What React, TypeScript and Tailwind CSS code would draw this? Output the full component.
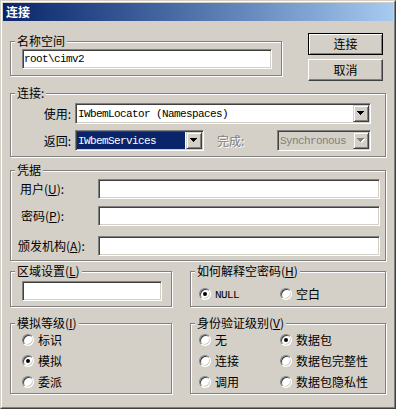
import { ReactNode } from "react";
import clsx from "clsx";

const sunken =
  "border border-t-[#808080] border-l-[#808080] border-r-white border-b-white shadow-[inset_1px_1px_0_#404040,inset_-1px_-1px_0_#d4d0c8]";
const raised =
  "border border-t-[#d4d0c8] border-l-[#d4d0c8] border-r-[#404040] border-b-[#404040] shadow-[inset_1px_1px_0_#fff,inset_-1px_-1px_0_#808080]";
const mono = "font-['Liberation_Mono',monospace] text-[11px] tracking-[-0.6px]";

const Group = ({ label, className, children }: { label: ReactNode; className?: string; children?: ReactNode }) => (
  <div className={clsx("relative shrink-0 border border-[#808080] shadow-[inset_1px_1px_0_#fff,1px_1px_0_#fff]", className)}>
    <span className="absolute -top-[8px] left-[4px] bg-[#d4d0c8] px-[2px] leading-[14px] whitespace-nowrap">{label}</span>
    {children}
  </div>
);

const Arrow = ({ disabled }: { disabled?: boolean }) => (
  <span className={clsx("flex h-full w-[16px] shrink-0 items-center justify-center bg-[#d4d0c8]", raised)}>
    <svg width="8" height="5" viewBox="0 0 8 5" shapeRendering="crispEdges">
      {disabled && <path d="M1 1h7v1H1zM2 2h5v1H2zM3 3h3v1H3zM4 4h1v1H4z" fill="#fff" />}
      <path d="M0 0h7v1H0zM1 1h5v1H1zM2 2h3v1H2zM3 3h1v1H3z" fill={disabled ? "#808080" : "#000"} />
    </svg>
  </span>
);

const Combo = ({
  children,
  className,
  selected,
  disabled,
}: {
  children: ReactNode;
  className?: string;
  selected?: boolean;
  disabled?: boolean;
}) => (
  <div className={clsx("flex h-[21px] shrink-0 p-[1px]", sunken, disabled ? "bg-[#d4d0c8]" : "bg-white", className)}>
    <span
      className={clsx(
        "flex flex-1 items-center pl-[1px] whitespace-pre",
        mono,
        selected && "mr-[1px] bg-[#0a246a] text-white",
        disabled && "text-[#808080]"
      )}
    >
      {children}
    </span>
    <Arrow disabled={disabled} />
  </div>
);

const Field = ({ className }: { className?: string }) => (
  <div className={clsx("flex h-[20px] shrink-0 items-center bg-white pl-[1px]", sunken, mono, className)} />
);

const Radio = ({ checked }: { checked?: boolean }) => (
  <span
    className={clsx(
      "flex h-[12px] w-[12px] shrink-0 items-center justify-center rounded-full bg-white",
      "border border-t-[#808080] border-l-[#808080] border-r-white border-b-white shadow-[inset_1px_1px_0_#404040,inset_-1px_-1px_0_#d4d0c8]"
    )}
  >
    {checked && <span className="h-[4px] w-[4px] rounded-full bg-black" />}
  </span>
);

const RadioItem = ({ children, checked, className }: { children: ReactNode; checked?: boolean; className?: string }) => (
  <div className={clsx("flex items-center gap-[4px] whitespace-nowrap", className)}>
    <Radio checked={checked} />
    <span>{children}</span>
  </div>
);

const Btn = ({ children, isDefault }: { children: ReactNode; isDefault?: boolean }) => (
  <button
    type="button"
    className={clsx(
      "flex h-[22px] w-[75px] items-center justify-center bg-[#d4d0c8]",
      isDefault
        ? "border border-black shadow-[inset_1px_1px_0_#fff,inset_-1px_-1px_0_#808080]"
        : "border border-t-white border-l-white border-r-[#404040] border-b-[#404040] shadow-[inset_-1px_-1px_0_#808080]"
    )}
  >
    {children}
  </button>
);

const Key = ({ k }: { k: string }) => (
  <>
    (<span className="underline underline-offset-[1px]">{k}</span>)
  </>
);

export default function App() {
  return (
    <div className="h-[409px] w-[396px] border border-t-[#d4d0c8] border-l-[#d4d0c8] border-r-[#404040] border-b-[#404040] bg-[#d4d0c8] font-['Noto_Sans_CJK_SC',sans-serif] text-[12px] leading-[14px] text-black">
      <div className="h-full border border-t-white border-l-white border-r-[#808080] border-b-[#808080] p-[1px]">
        <div className="flex h-[18px] items-center bg-linear-to-r from-[#0a246a] to-[#a6caf0] pl-[3px] font-bold text-white">
          连接
        </div>

        <div className="flex flex-col pl-[7px]">
          {/* namespace + buttons */}
          <div className="flex h-[55px] items-start">
            <Group label="名称空间" className="mt-[20px] h-[35px] w-[272px] pl-[11px] pt-[7px]">
              <div className={clsx("flex h-[20px] w-[250px] items-center bg-white pl-[1px]", sunken, mono)}>
                {"root\\cimv2"}
              </div>
            </Group>
            <div className="ml-[26px] mt-[12px] flex flex-col gap-[4px]">
              <Btn isDefault>连接</Btn>
              <Btn>取消</Btn>
            </div>
          </div>

          {/* connection */}
          <Group label="连接:" className="mt-[17px] h-[64px] w-[376px] pt-[9px]">
            <div className="flex h-[21px] items-center">
              <span className="w-[60px] text-right">使用:</span>
              <Combo className="ml-[4px] w-[296px]">IWbemLocator (Namespaces)</Combo>
            </div>
            <div className="mt-[6px] flex h-[21px] items-center">
              <span className="w-[60px] text-right">返回:</span>
              <Combo selected className="ml-[4px] w-[129px]">
                IWbemServices
              </Combo>
              <span className="ml-[13px] w-[32px] text-[#808080] [text-shadow:1px_1px_0_#fff]">完成:</span>
              <Combo disabled className="ml-[28px] w-[94px]">
                Synchronous
              </Combo>
            </div>
          </Group>

          {/* credentials */}
          <Group label="凭据" className="mt-[13px] h-[91px] w-[376px] pt-[8px]">
            <div className="flex h-[20px] items-center">
              <span className="w-[87px] pl-[9px]">
                用户<Key k="U" />:
              </span>
              <Field className="w-[282px]" />
            </div>
            <div className="mt-[7px] flex h-[20px] items-center">
              <span className="w-[87px] pl-[10px]">
                密码<Key k="P" />:
              </span>
              <Field className="w-[282px]" />
            </div>
            <div className="mt-[10px] flex h-[20px] items-center">
              <span className="w-[87px] pl-[7px] whitespace-nowrap">
                颁发机构<Key k="A" />:
              </span>
              <Field className="w-[282px]" />
            </div>
          </Group>

          {/* locale + null password */}
          <div className="mt-[10px] flex items-start">
            <Group label={<>区域设置<Key k="L" /></>} className="h-[36px] w-[162px] pl-[11px] pt-[9px]">
              <Field className="w-[140px]" />
            </Group>
            <Group label={<>如何解释空密码<Key k="H" /></>} className="ml-[18px] h-[36px] w-[196px] pl-[8px] pt-[15px]">
              <div className="flex h-[14px] items-center">
                <RadioItem checked className="w-[81px]">
                  <span className={mono}>NULL</span>
                </RadioItem>
                <RadioItem>空白</RadioItem>
              </div>
            </Group>
          </div>

          {/* impersonation + authentication */}
          <div className="mt-[16px] flex items-start">
            <Group label={<>模拟等级<Key k="I" /></>} className="h-[71px] w-[162px] pl-[11px] pt-[5px]">
              <RadioItem className="h-[21px]">标识</RadioItem>
              <RadioItem checked className="h-[21px]">
                模拟
              </RadioItem>
              <RadioItem className="h-[21px]">委派</RadioItem>
            </Group>
            <Group label={<>身份验证级别<Key k="V" /></>} className="ml-[18px] h-[71px] w-[196px] pl-[8px] pt-[5px]">
              <div className="grid grid-cols-[81px_1fr] auto-rows-[21px]">
                <RadioItem>无</RadioItem>
                <RadioItem checked>数据包</RadioItem>
                <RadioItem>连接</RadioItem>
                <RadioItem>数据包完整性</RadioItem>
                <RadioItem>调用</RadioItem>
                <RadioItem>数据包隐私性</RadioItem>
              </div>
            </Group>
          </div>
        </div>
      </div>
    </div>
  );
}
